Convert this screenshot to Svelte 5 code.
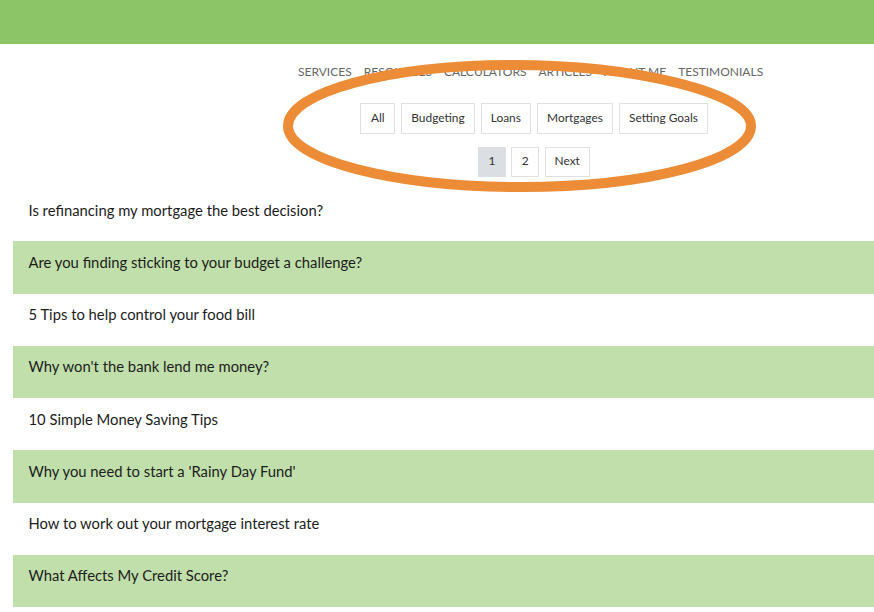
<script>
  const nav = ['SERVICES', 'RESOURCES', 'CALCULATORS', 'ARTICLES', 'ABOUT ME', 'TESTIMONIALS'];
  const filters = ['All', 'Budgeting', 'Loans', 'Mortgages', 'Setting Goals'];
  const pages = ['1', '2', 'Next'];
  const posts = [
    'Is refinancing my mortgage the best decision?',
    'Are you finding sticking to your budget a challenge?',
    '5 Tips to help control your food bill',
    "Why won't the bank lend me money?",
    '10 Simple Money Saving Tips',
    "Why you need to start a 'Rainy Day Fund'",
    'How to work out your mortgage interest rate',
    'What Affects My Credit Score?'
  ];
</script>

<div class="page">
  <header class="top"></header>
  <nav class="nav">
    {#each nav as item}<a href="#top">{item}</a>{/each}
  </nav>
  <div class="filters">
    {#each filters as f}<button>{f}</button>{/each}
  </div>
  <div class="pager">
    {#each pages as p, i}<button class:active={i === 0}>{p}</button>{/each}
  </div>
  <ul class="posts">
    {#each posts as post}<li>{post}</li>{/each}
  </ul>
  <svg class="oval" width="480" height="140" viewBox="0 0 480 140" aria-hidden="true">
    <path d="M5 70C5 36.3 105 9 230 9C350 9 468 36.3 468 70C468 103.7 365 131 238 131C110 131 5 103.7 5 70Z" fill="none" stroke="#ec8c37" stroke-width="10" />
  </svg>
</div>

<style>
  :global(body) {
    margin: 0;
    background: #fff;
    font-family: Lato, "Open Sans", sans-serif;
  }
  .page {
    position: relative;
    width: 874px;
    height: 612px;
    overflow: hidden;
  }
  .top {
    height: 44px;
    background: #8cc568;
  }
  .nav {
    display: flex;
    gap: 12px;
    padding: 20px 0 0 298px;
    height: 39px;
    box-sizing: border-box;
    align-items: flex-start;
  }
  .nav a {
    font-size: 12px;
    line-height: 16px;
    color: #666;
    text-decoration: none;
    white-space: nowrap;
  }
  .filters {
    display: flex;
    gap: 6.2px;
    padding: 20px 0 0 360.3px;
  }
  .filters button:first-child {
    min-width: 34.8px;
  }
  .pager {
    display: flex;
    gap: 5.3px;
    padding: 13px 0 0 478px;
  }
  button {
    font: inherit;
    font-size: 11.9px;
    line-height: 16px;
    color: #333;
    background: #fff;
    border: 1px solid #e0e0e0;
    height: 31px;
    padding: 0 9px 2px;
    box-sizing: border-box;
    white-space: nowrap;
  }
  .pager button {
    height: 30px;
    min-width: 28px;
  }
  .pager button.active {
    background: #dbdfe4;
    border-color: #dbdfe4;
  }
  .posts {
    list-style: none;
    margin: 12px 0 0 13px;
    padding: 0;
  }
  .posts li {
    height: 52.25px;
    box-sizing: border-box;
    padding: 10.5px 15.5px 0;
    font-size: 14.8px;
    line-height: 20px;
    color: #1c1c1c;
  }
  .posts li:nth-child(even) {
    background: #c1dfab;
  }
  .oval {
    position: absolute;
    left: 283px;
    top: 56px;
    pointer-events: none;
  }
</style>
